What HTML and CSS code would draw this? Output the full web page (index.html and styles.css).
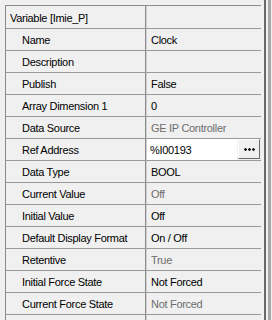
FILE: index.html
```html
<!DOCTYPE html>
<html>
<head>
<meta charset="utf-8">
<link rel="stylesheet" href="styles.css">
</head>
<body>
<div class="frame">
  <div class="grid">
    <div class="row head"><div class="label">Variable [Imie_P]</div><div class="value"></div></div>
    <div class="row"><div class="label sub">Name</div><div class="value">Clock</div></div>
    <div class="row"><div class="label sub">Description</div><div class="value"></div></div>
    <div class="row"><div class="label sub">Publish</div><div class="value">False</div></div>
    <div class="row"><div class="label sub">Array Dimension 1</div><div class="value">0</div></div>
    <div class="row"><div class="label sub">Data Source</div><div class="value dim">GE IP Controller</div></div>
    <div class="row"><div class="label sub">Ref Address</div><div class="value edit"><span class="box">%I00193</span><span class="btn"><svg width="13" height="3" viewBox="0 0 13 3"><g fill="#000"><rect x="1" y="0" width="1" height="3"/><rect x="0" y="1" width="3" height="1"/><rect x="5" y="0" width="1" height="3"/><rect x="4" y="1" width="3" height="1"/><rect x="9" y="0" width="1" height="3"/><rect x="8" y="1" width="3" height="1"/></g><g fill="#444"><rect x="0" y="0" width="3" height="3" opacity="0.35"/><rect x="4" y="0" width="3" height="3" opacity="0.35"/><rect x="8" y="0" width="3" height="3" opacity="0.35"/></g></svg></span></div></div>
    <div class="row"><div class="label sub">Data Type</div><div class="value">BOOL</div></div>
    <div class="row"><div class="label sub">Current Value</div><div class="value dim">Off</div></div>
    <div class="row"><div class="label sub">Initial Value</div><div class="value">Off</div></div>
    <div class="row"><div class="label sub">Default Display Format</div><div class="value">On / Off</div></div>
    <div class="row"><div class="label sub">Retentive</div><div class="value dim">True</div></div>
    <div class="row"><div class="label sub">Initial Force State</div><div class="value">Not Forced</div></div>
    <div class="row"><div class="label sub">Current Force State</div><div class="value dim">Not Forced</div></div>
    <div class="row tail"><div class="label sub"></div><div class="value"></div></div>
  </div>
  <div class="edge"></div>
</div>
</body>
</html>
```
FILE: styles.css
```css
html, body {
  margin: 0;
  padding: 0;
  background: #f0f0f0;
}
body {
  width: 272px;
  height: 320px;
  overflow: hidden;
  font-family: "Liberation Sans", Arial, sans-serif;
  font-size: 11px;
  letter-spacing: -0.3px;
  color: #000;
}
.frame {
  display: flex;
  padding: 5px 0 0 5px;
  height: 315px;
  overflow: hidden;
}
.grid {
  width: 255px;
  border-top: 1px solid #8c8c8c;
  border-left: 1px solid #8c8c8c;
  display: flex;
  flex-direction: column;
  overflow: hidden;
}
.row {
  display: flex;
  height: 21px;
  border-bottom: 1px solid #9a9a9a;
  flex: none;
}
.row.head {
  height: 22px;
}
.row.tail {
  height: 5px;
  border-bottom: 0;
}
.label {
  width: 140px;
  border-right: 1px solid #8c8c8c;
  padding-left: 4px;
  box-sizing: border-box;
  line-height: 23px;
  white-space: nowrap;
  overflow: hidden;
}
.head .label, .head .value {
  line-height: 24px;
}
.label.sub {
  padding-left: 16px;
}
.value {
  flex: 1;
  border-left: 1px solid #d0d0d0;
  padding-left: 4px;
  line-height: 23px;
  white-space: nowrap;
  overflow: hidden;
}
.value.dim {
  color: #6d6d6d;
}
.value.edit {
  display: flex;
  padding-left: 0;
}
.box {
  width: 87px;
  background: #fff;
  padding-left: 3px;
  height: 21px;
}
.btn {
  width: 18px;
  height: 18px;
  margin-left: 1px;
  border-top: 1px solid #fff;
  border-left: 1px solid #fff;
  border-right: 1px solid #6a6a6a;
  border-bottom: 1px solid #6a6a6a;
  display: flex;
  align-items: center;
  justify-content: center;
  padding-left: 2px;
  box-sizing: content-box;
}
.btn svg {
  display: block;
}
.edge {
  width: 2px;
  margin-left: 3px;
  margin-top: -5px;
  height: 320px;
  background: #6a6a6a;
  border-right: 2px solid #f0f0f0;
  box-shadow: 3px 0 0 #a8a8a8;
}
```
